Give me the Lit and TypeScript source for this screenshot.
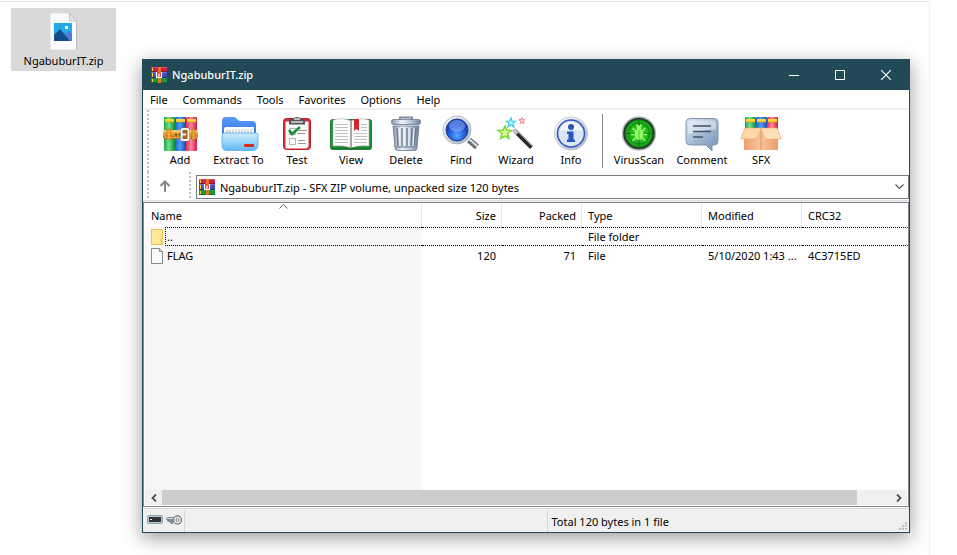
import { LitElement, html, svg, css, TemplateResult, SVGTemplateResult } from "lit";
import { customElement } from "lit/decorators.js";
import { classMap } from "lit/directives/class-map.js";

type Art = SVGTemplateResult;

const archive: Art = svg`
  <rect x="0" y="0" width="16" height="5" fill="#c9204c"/><rect x="0" y="0" width="16" height="1" fill="#e5476e"/><rect x="0" y="4" width="16" height="1" fill="#8e1438"/>
  <rect x="0" y="5" width="16" height="6" fill="#4a4ab4"/><rect x="0" y="5" width="16" height="1" fill="#6d6ddb"/><rect x="0" y="10" width="16" height="1" fill="#2c2c7c"/>
  <rect x="0" y="11" width="16" height="5" fill="#1b9a3c"/><rect x="0" y="15" width="16" height="1" fill="#0d6425"/>
  <rect x="1" y="1" width="1" height="3" fill="#f8d040"/><rect x="1" y="6" width="1" height="4" fill="#f8d040"/><rect x="1" y="12" width="1" height="3" fill="#f8d040"/>
  <rect x="6" y="0" width="4" height="16" fill="#e8742a"/><rect x="6" y="0" width="1" height="16" fill="#b04a18"/>
  <rect x="5" y="5" width="6" height="6" fill="#d64b2a"/>
  <path d="M5.500 5V10.500H10.500V5M8 6.500V10" fill="none" stroke="#fff" stroke-width="1.200"/>`;

const books = (top: number, h: number, xs: number[], w: number): Art => svg`
  ${xs.map((x, i) => svg`
    <rect x=${x} y=${top} width=${w} height=${h} rx="1" fill=${["url(#gGreen)", "url(#gBlue)", "url(#gRed)"][i]}/>
    <rect x=${x + 1} y=${top + 2} width=${w - 2} height="3" fill="#ffd633"/>
    <path d=${`M${x + 1} ${top + 5}h${w - 2}`} stroke="#c79412" stroke-width=".6"/>`)}`;

const defs: Art = svg`<defs>
  <linearGradient id="gGreen"><stop offset="0" stop-color="#1fa548"/><stop offset=".45" stop-color="#6fe38c"/><stop offset="1" stop-color="#0c8832"/></linearGradient>
  <linearGradient id="gBlue"><stop offset="0" stop-color="#1c5fce"/><stop offset=".45" stop-color="#4f9ffa"/><stop offset="1" stop-color="#1648ae"/></linearGradient>
  <linearGradient id="gRed"><stop offset="0" stop-color="#e62c56"/><stop offset=".45" stop-color="#ff869e"/><stop offset="1" stop-color="#cc1c42"/></linearGradient>
  <linearGradient id="gBelt" x2="0" y2="1"><stop offset="0" stop-color="#f8c56e"/><stop offset=".5" stop-color="#e39a30"/><stop offset="1" stop-color="#b06a1a"/></linearGradient>
  <linearGradient id="gFold" x2="0" y2="1"><stop offset="0" stop-color="#cdedff"/><stop offset=".5" stop-color="#9ad6fb"/><stop offset="1" stop-color="#62b4f4"/></linearGradient>
  <linearGradient id="gFoldB" x2="0" y2="1"><stop offset="0" stop-color="#5b9bf8"/><stop offset="1" stop-color="#2566d8"/></linearGradient>
  <linearGradient id="gSteel"><stop offset="0" stop-color="#8496aa"/><stop offset=".35" stop-color="#eef3f9"/><stop offset=".7" stop-color="#b3c1d1"/><stop offset="1" stop-color="#6c7d93"/></linearGradient>
  <linearGradient id="gRim" x2="1" y2="1"><stop offset="0" stop-color="#ffffff"/><stop offset=".5" stop-color="#d5dbe3"/><stop offset="1" stop-color="#a6afba"/></linearGradient>
  <radialGradient id="gLens" cy=".75"><stop offset="0" stop-color="#58a8ff"/><stop offset=".6" stop-color="#2a66e2"/><stop offset="1" stop-color="#1d46ba"/></radialGradient>
  <radialGradient id="gScan"><stop offset="0" stop-color="#3fd62a"/><stop offset="1" stop-color="#16a018"/></radialGradient>
  <linearGradient id="gNote" x2="1" y2="1"><stop offset="0" stop-color="#dce8f5"/><stop offset=".5" stop-color="#a2b8d2"/><stop offset="1" stop-color="#7690b2"/></linearGradient>
  <linearGradient id="gBox"><stop offset="0" stop-color="#f0a070"/><stop offset=".5" stop-color="#fac49c"/><stop offset="1" stop-color="#ee9c6a"/></linearGradient>
</defs>`;

const art: Record<string, Art> = {
  Add: svg`${books(2, 34, [6, 17, 28], 11)}
    <rect x="5" y="15" width="35" height="9" rx="2" fill="url(#gBelt)"/>
    <path d="M7 16.500h14M7 22.500h14M31 16.500h8M31 22.500h8" stroke="#ffdb91" stroke-width=".7" stroke-dasharray="2 1"/>
    <rect x="9" y="14" width="4" height="11" rx="1" fill="#f1a636" stroke="#9a5c16" stroke-width=".5"/>
    <rect x="34" y="14" width="3" height="11" rx="1" fill="#f1a636" stroke="#9a5c16" stroke-width=".5"/>
    <circle cx="18" cy="19.500" r="1" fill="#5c3208"/><circle cx="21.500" cy="19.500" r="1" fill="#5c3208"/>
    <rect x="23.500" y="14" width="7" height="11" rx="1.500" fill="#a66a22" stroke="#6f655c" stroke-width="3"/>
    <rect x="23.500" y="14" width="7" height="11" rx="1.500" fill="none" stroke="#faf6f0" stroke-width="2"/>
    <path d="M23 19.500h5" stroke="#fff" stroke-width="1.800"/>`,
  "Extract To": svg`
    <path d="M5 6q0-4 4-4h8q2 0 3 2l1 1q1 1 3 1h11q4 0 4 4v18H5z" fill="url(#gFoldB)"/>
    <path d="M7 21V14q0-2 2-2h28v9z" fill="#fff"/>
    <path d="M10 14.500v4M13 14.500v4M16 14.500v4M19 14.500v4M22 14.500v4M25 14.500v4M28 14.500v4M31 14.500v4M34 14.500v4" stroke="#c9cfd8" stroke-width="1.600" fill="none"/>
    <path d="M5 20q0-2 2-2h32q2 0 2 2v10q0 5-5 5.500H10q-5 0-5-5z" fill="url(#gFold)" stroke="#5baaec" stroke-width=".8"/>
    <rect x="27" y="29" width="10" height="3" rx="1" fill="#dc2921"/>`,
  Test: svg`
    <rect x="8.500" y="3.500" width="27" height="31" rx="3" fill="#d92c35" stroke="#b31f28"/>
    <path d="M10.500 6.500h23v25l-2 2h-21z" fill="#fafafa"/>
    <path d="M14 9.500V6q0-2 2-2h2q1-2 4-2t4 2h2q2 0 2 2v3.500z" fill="#545459"/><path d="M16 7h12M19 4h6" stroke="#dedee0" stroke-width="1.500"/>
    <path d="M14.500 13.500h6v6h-6zM14.500 23.500h6v6h-6z" fill="none" stroke="#b3b3b5"/>
    <path d="M14 15l3 4 8-7" fill="none" stroke="#17923a" stroke-width="2.600"/>
    <path d="M24 15.500h8M22 18.500h8M23 25.500h7M23 28.500h8" stroke="#9797a0"/>`,
  View: svg`
    <rect x="1.500" y="4.500" width="41" height="30" rx="2" fill="#1c9238" stroke="#0c6423" stroke-width=".8"/>
    <path d="M4 5q10-3 18 1 8-4 18-1v26q-11-1-18 2-7-3-18-2z" fill="#fcfcfc" stroke="#a9a9a9" stroke-width=".6"/>
    <path d="M22 6v27" stroke="#8a8a8a" stroke-width="1.500"/>
    <path d="M6 9.500h13M6 12.500h13M6 15.500h13M6 18.500h13M6 21.500h13M6 24.500h13M6 27.500h13M32 12.500h6M32 9.500h6M32 15.500h6M25 18.500h13M25 21.500h13M25 24.500h13M25 27.500h13" stroke="#c1c1c3"/>
    <path d="M25 4h5v12l-2.500-2-2.500 2z" fill="#d32631"/><path d="M3 33h16q3 0 3 2 0-2 3-2h16" stroke="#0d6c25" fill="none"/>`,
  Delete: svg`
    <path d="M16 5V2.500h12V5" fill="none" stroke="#7e8ea0" stroke-width="2"/>
    <rect x="7.500" y="4.500" width="29" height="5" rx="2" fill="url(#gSteel)" stroke="#68798f" stroke-width=".8"/>
    <path d="M9 11h26l-2 22q0 2.500-3 2.500H14q-3 0-3-2.500z" fill="url(#gSteel)" stroke="#66778e" stroke-width=".8"/>
    <path d="M13 13l1 18M18 13v18M23 13v18M28 13l-1 18M32 13l-2 18" stroke="#6a7b92" stroke-width="1.400"/>
    <path d="M15 13l1 18M20 13v18M25 13v18M30 13l-1 18" stroke="#f6faff"/><path d="M11 32h22" stroke="#8294aa" stroke-width="1.500"/>`,
  Find: svg`
    <path d="M30 25l8 7" stroke="#6a6f76" stroke-width="6"/><path d="M29.500 23.500l9 8" stroke="#dfe3e8" stroke-width="2"/>
    <circle cx="18" cy="15" r="14" fill="url(#gRim)" stroke="#a3abb5" stroke-width=".8"/>
    <circle cx="18" cy="15" r="11" fill="url(#gLens)" stroke="#1b3c91"/>
    <ellipse cx="18" cy="11" rx="8" ry="6" fill="#9fc6ff" opacity=".45"/>`,
  Wizard: svg`
    <path d="M20.500 15.500l17 17" stroke="#29292b" stroke-width="4"/>
    <path d="M19.500 14.500l4 4" stroke="#c4c4c8" stroke-width="4.500"/><path d="M22 15l16 16" stroke="#9b9ba0" stroke-width="1"/>
    <path d="M11 11l1.500 4 5 .5-4 3 1.500 5-4-2.500-4.500 2.500 1.500-5-4-3 5-.5z" fill="#d9ff9c" stroke="#78dc30" stroke-width="1.500"/>
    <path d="M17 3l1 3 3.500.3-2.600 2 1 3.500-2.900-2-3 2 1-3.500-2.600-2L16 6z" fill="#c6fbff" stroke="#34cbf0" stroke-width="1.200"/>
    <path d="M28 2.500l.8 2 2.300.2-1.800 1.500.7 2.400-2-1.300-2 1.300.7-2.400-1.800-1.500 2.300-.2z" fill="#ffdada" stroke="#f37882" stroke-width=".9"/>`,
  Info: svg`
    <circle cx="22" cy="18.500" r="16.500" fill="url(#gRim)" stroke="#bcc3cc" stroke-width=".8"/>
    <circle cx="22" cy="18.500" r="13.500" fill="#dbe6f5" stroke="#2f59bb" stroke-width="1.600"/>
    <path d="M11 16q2-9 11-9t11 9q-11-3-22 0z" fill="#fff" opacity=".7"/>
    <circle cx="22" cy="12" r="3" fill="#2855bd"/><path d="M18 16.500h6.500v8H26V27h-8v-2.500h1.500V19H18z" fill="#2855bd"/>`,
  VirusScan: svg`
    <circle cx="22" cy="18.500" r="16.500" fill="#303732" stroke="#b5bbb7" stroke-width="1.400"/>
    <circle cx="22" cy="18.500" r="14" fill="url(#gScan)" stroke="#075b0b" stroke-width=".8"/>
    <path d="M22 5v27M8.500 18.500h27" stroke="#0b6b12" stroke-width=".9"/><circle cx="22" cy="18.500" r="10.500" fill="none" stroke="#0f7a15" stroke-width=".9"/>
    <path d="M15.500 13l3 3M28.500 13l-3 3M14 19.500h3M30 19.500h-3M15.500 26l3-3M28.500 26l-3-3M19.500 9.500l1.500 2M24.500 9.500l-1.500 2" stroke="#9aff73" stroke-width="1.300"/>
    <ellipse cx="22" cy="19.500" rx="4.500" ry="5.500" fill="#8dfc62"/><circle cx="22" cy="13" r="2.500" fill="#8dfc62"/><path d="M22 15v10" stroke="#3fc22a" stroke-width=".8"/>`,
  Comment: svg`
    <path d="M10 3.500h24q4 0 4 4V26q0 4-4 4h-2v6l-6-6H10q-4 0-4-4V7.500q0-4 4-4z" fill="url(#gNote)" stroke="#8295ae"/>
    <path d="M11 5.500h22q3 0 3 3v6q-14 0-28 5v-11q0-3 3-3z" fill="#eef5fc" opacity=".5"/>
    <path d="M13 11h18M13 16.500h18M13 22h10" stroke="#41526a" stroke-width="1.500"/>`,
  SFX: svg`${books(2, 16, [6, 17, 28], 11)}
    <path d="M5 14h34v21H5z" fill="url(#gBox)"/><path d="M22 14v21" stroke="#d88351" stroke-width=".8"/>
    <path d="M6 13h16v1L18 24H1.500z" fill="#fcd8a8" stroke="#e3a46c" stroke-width=".6"/>
    <path d="M38 13H22v1l4 10h16.500z" fill="#fce0b8" stroke="#e3a46c" stroke-width=".6"/>`,
};

const tools = ["Add", "Extract To", "Test", "View", "Delete", "Find", "Wizard", "Info"];
const extras = ["VirusScan", "Comment", "SFX"];
const menus = ["File", "Commands", "Tools", "Favorites", "Options", "Help"];
const columns = ["Name", "Size", "Packed", "Type", "Modified", "CRC32"];

interface Entry { name: string; size: string; packed: string; type: string; modified: string; crc: string; folder: boolean; }
const entries: Entry[] = [
  { name: "..", size: "", packed: "", type: "File folder", modified: "", crc: "", folder: true },
  { name: "FLAG", size: "120", packed: "71", type: "File", modified: "5/10/2020 1:43 ...", crc: "4C3715ED", folder: false },
];

@customElement("app-root")
export class AppRoot extends LitElement {
  static styles = css`
    :host { display: block; font: 11px/16px "Noto Sans", "Open Sans", sans-serif; color: #000; }
    * { box-sizing: border-box; }
    svg { display: block; flex: none; }
    button, select { font: inherit; color: inherit; background: none; border: 0; padding: 0; margin: 0; }
    .desktop { display: flex; align-items: stretch; min-height: 100vh; margin-right: 27px; padding: 0 19px 22px 11px;
      border-right: 1px solid #f1f1f1; background: linear-gradient(#e5e5e5, #e5e5e5) 0 1px / 100% 1px no-repeat, #fff; }
    .shortcut { display: flex; flex-direction: column; align-items: center; gap: 2px; width: 105px; height: 63px;
      margin: 8px 26px 0 0; padding-top: 4px; background: #d9d9d9; flex: none; }
    .window { flex: 1; min-width: 0; display: flex; flex-direction: column; margin-top: 59px; border: 1px solid #224956;
      background: #fff; box-shadow: 0 5px 18px rgba(0, 0, 0, .4); }
    .title { display: flex; align-items: center; height: 30px; padding-left: 8px; background: #224956; color: #fff; }
    .title h1 { flex: 1; margin: 0 0 0 5px; font-size: 11px; line-height: 16px; font-weight: 500; }
    .title button { display: grid; place-items: center; width: 46px; height: 30px; }
    .menu { display: flex; gap: 15px; height: 20px; padding-left: 7px; border-bottom: 2px solid #f0f0f0; }
    .menu button { height: 18px; padding-top: 2px; line-height: 16px; }
    .grip { width: 2px; background: repeating-linear-gradient(#c0c0c0 0 2px, #fff 2px 4px); }
    .tools { display: grid; grid-template-columns: 2px 4px 54px 63px 54px 54px 56px 54px 56px 54px 9px 64px 62px 56px;
      height: 62px; padding-left: 4px; }
    .tool { display: flex; flex-direction: column; align-items: center; padding-top: 5px; gap: 1px; white-space: nowrap; }
    .rule { justify-self: center; width: 1px; height: 54px; margin-top: 4px; background: #8a8a8a; }
    .place { display: flex; height: 30px; padding-left: 4px; border-bottom: 2px solid #e4e4e6; }
    .up { display: grid; place-items: center; width: 32px; }
    .up + .grip { margin: 0 5px 0 8px; }
    .address { flex: 1; display: flex; align-items: center; height: 24px; margin-top: 3px; padding: 0 4px 0 2px; border: 1px solid #7a7a7a; }
    .address select { flex: 1; appearance: none; height: 20px; margin-left: 5px; padding-top: 1px; outline: 0; }
    .list { flex: 1; display: flex; flex-direction: column; border: 1px solid #828790; }
    .rows { flex: 1; background: linear-gradient(#f7f7f7, #f7f7f7) 1px 24px / 277px 100% no-repeat; }
    table { width: 100%; table-layout: fixed; border-spacing: 0; }
    th, td { padding: 0 5px 0 6px; text-align: left; font-weight: 400; white-space: nowrap; }
    th { height: 24px; padding-top: 2px; border-right: 1px solid #e5e5e5; background: #fff; }
    th:first-child { padding: 0 5px 0 7px; }
    th:last-child { border-right: 0; }
    td { height: 19px; padding-top: 1px; border-right: 1px solid transparent; line-height: 16px; }
    .num { text-align: right; }
    .c-name { width: 278px; } .c-num { width: 80px; } .c-type { width: 120px; } .c-mod { width: 100px; }
    .sorted { display: grid; grid-template-columns: 1fr auto 1fr; height: 24px; align-items: center; }
    .sorted span { padding-top: 2px; }
    .sorted svg { align-self: start; margin-top: 1px; }
    td.name { padding: 0 0 0 7px; border-right: 0; }
    .cell { display: flex; align-items: center; height: 19px; }
    .cell span { flex: 1; margin-left: 2px; padding: 2px 0 1px 2px; line-height: 16px; }
    .focused td { border-top: 1px dotted #000; border-bottom: 1px dotted #000; }
    .focused td.name { border: 0; }
    .focused .cell span { border: 1px dotted #000; border-right: 0; padding: 1px 0 0 1px; }
    .scroll { display: flex; height: 15px; margin: 0 1px 1px; background: #f0f0f0; }
    .scroll button { display: grid; place-items: center; width: 17px; height: 15px; }
    .track { flex: 1; padding-right: 33px; }
    .thumb { height: 15px; background: #cdcdcd; }
    .status { display: flex; height: 25px; padding-top: 2px; border-top: 1px solid #fff; background: #f0f0f0; box-shadow: inset 0 1px #d9d9d9; }
    .status > div { flex: 1; display: flex; align-items: center; padding-left: 4px; }
    .status .keys { flex: none; width: 42px; gap: 3px; align-items: flex-start; padding-top: 5px; border-right: 1px solid #d7d7d7; }
    .status .total { justify-content: space-between; border-left: 1px solid #d7d7d7; }
    .status .total span { padding-top: 2px; }
    .status .total svg { align-self: flex-end; margin: 0 2px 2px 0; }
  `;

  private icon(w: number, h: number, body: Art): TemplateResult {
    return html`<svg width=${w} height=${h} viewBox="0 0 ${w} ${h}" aria-hidden="true">${body}</svg>`;
  }

  private tool(name: string) {
    return html`<button class="tool">${this.icon(44, 36, svg`${defs}${art[name]}`)}<span>${name}</span></button>`;
  }

  private row(e: Entry) {
    const page = svg`<path d="M.500.500h8l3 3v12H.500z" fill="#fbfbfb" stroke="#8a8a8a"/><path d="M8.500.500v3h3" fill="none" stroke="#8a8a8a"/>`;
    const folder = svg`<path d="M.500.500h11v15H.500z" fill="#ffe699" stroke="#eac54f"/><path d="M10.500 9.500h1.500v6h-2z" fill="#ffe699" stroke="#eac54f"/>`;
    return html`<tr class=${classMap({ focused: e.folder })}>
      <td class="name"><div class="cell">${this.icon(12, 16, e.folder ? folder : page)}<span>${e.name}</span></div></td>
      <td class="num">${e.size}</td><td class="num">${e.packed}</td><td>${e.type}</td><td>${e.modified}</td><td>${e.crc}</td>
    </tr>`;
  }

  render() {
    return html`<main class="desktop">
      <div class="shortcut">
        ${this.icon(30, 39, svg`
          <path d="M1.500 1.500h19l7 7v29h-26z" fill="#f9fafb" stroke="#ececec"/><path d="M27.500 9v29" stroke="#bababa"/>
          <path d="M20.500 1v8h7z" fill="#e4e4e4" stroke="#bababa" stroke-width=".8"/>
          <rect x="5" y="11" width="18" height="18" fill="#25a8e8"/><rect x="16" y="14" width="3" height="3" fill="#fff"/>
          <path d="M15 25l5-6 3 3v7h-8z" fill="#5777da"/><path d="M5 23l6-6 10 12H5z" fill="#134d8e"/>`)}
        <span>NgabuburIT.zip</span>
      </div>
      <section class="window">
        <header class="title">
          ${this.icon(16, 16, archive)}<h1>NgabuburIT.zip</h1>
          <button aria-label="Minimize">${this.icon(10, 10, svg`<path d="M0 5.500h10" stroke="#fff"/>`)}</button>
          <button aria-label="Maximize">${this.icon(10, 10, svg`<path d="M.500.500h9v9h-9z" fill="none" stroke="#fff"/>`)}</button>
          <button aria-label="Close">${this.icon(10, 10, svg`<path d="M0 0l10 10M10 0L0 10" stroke="#fff" stroke-width="1.200"/>`)}</button>
        </header>
        <nav class="menu">${menus.map((m) => html`<button>${m}</button>`)}</nav>
        <div class="tools">
          <i class="grip"></i><i></i>${tools.map((t) => this.tool(t))}<i class="rule"></i>${extras.map((t) => this.tool(t))}
        </div>
        <div class="place">
          <i class="grip"></i>
          <button class="up" aria-label="Up one level">${this.icon(12, 12, svg`<path d="M6 12V2M1.500 6L6 1.500 10.500 6" fill="none" stroke="#888" stroke-width="2"/>`)}</button>
          <i class="grip"></i>
          <div class="address">
            ${this.icon(16, 16, archive)}
            <select aria-label="Address"><option>NgabuburIT.zip - SFX ZIP volume, unpacked size 120 bytes</option></select>
            ${this.icon(9, 6, svg`<path d="M.500.500l4 4 4-4" fill="none" stroke="#555" stroke-width="1.200"/>`)}
          </div>
        </div>
        <div class="list">
          <div class="rows">
            <table>
              <colgroup><col class="c-name"><col class="c-num"><col class="c-num"><col class="c-type"><col class="c-mod"><col></colgroup>
              <thead><tr>${columns.map((c, i) => i === 0
                ? html`<th><div class="sorted"><span>${c}</span>${this.icon(9, 5, svg`<path d="M.500 4.500l4-4 4 4" fill="none" stroke="#666"/>`)}</div></th>`
                : html`<th class=${classMap({ num: i < 3 })}>${c}</th>`)}</tr></thead>
              <tbody>${entries.map((e) => this.row(e))}</tbody>
            </table>
          </div>
          <div class="scroll">
            <button aria-label="Scroll left">${this.icon(6, 8, svg`<path d="M5 .500L1.500 4 5 7.500" fill="none" stroke="#505050" stroke-width="1.800"/>`)}</button>
            <div class="track"><div class="thumb"></div></div>
            <button aria-label="Scroll right">${this.icon(6, 8, svg`<path d="M1 .500L4.500 4 1 7.500" fill="none" stroke="#505050" stroke-width="1.800"/>`)}</button>
          </div>
        </div>
        <footer class="status">
          <div class="keys">
            ${this.icon(16, 9, svg`<rect x=".500" y=".500" width="15" height="8" rx="1" fill="#b6cad6" stroke="#8ba5b5"/><rect x="2" y="2" width="12" height="5" fill="#303438"/><rect x="3" y="4" width="2" height="1" fill="#dfe6ea"/>`)}
            ${this.icon(17, 10, svg`<path d="M0 4q0-2 2-2h7v5H7v2H5L4 7H2z" fill="#7f898f"/><path d="M1 3.500h8" stroke="#d5dade"/><circle cx="11.500" cy="5" r="4" fill="#f2f4f5" stroke="#7c868c" stroke-width="1.400"/><circle cx="11.500" cy="5" r="1.500" fill="#fff" stroke="#666f75"/>`)}
          </div>
          <div></div>
          <div class="total"><span>Total 120 bytes in 1 file</span>
            ${this.icon(8, 8, svg`<path d="M6 0h2v2H6zM3 3h2v2H3zM6 3h2v2H6zM0 6h2v2H0zM3 6h2v2H3zM6 6h2v2H6z" fill="#bfbfbf"/>`)}
          </div>
        </footer>
      </section>
    </main>`;
  }
}
